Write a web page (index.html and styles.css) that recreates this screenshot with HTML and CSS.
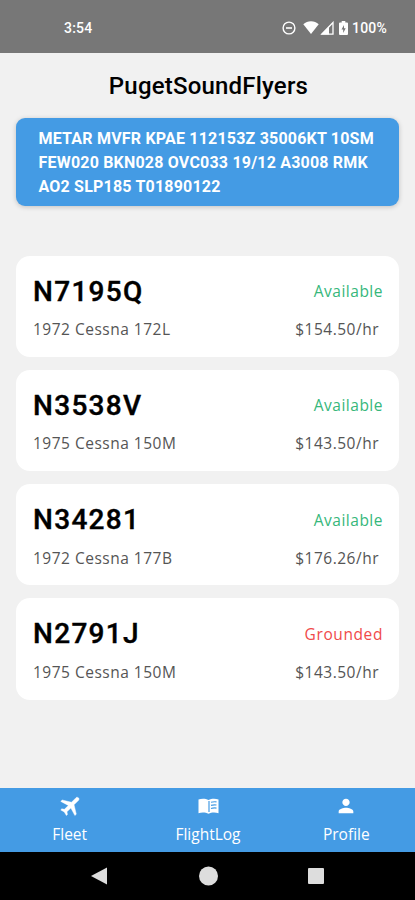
FILE: index.html
```html
<!DOCTYPE html>
<html lang="en">
<head>
<meta charset="UTF-8" />
<meta name="viewport" content="width=device-width, initial-scale=1" />
<title>PugetSoundFlyers</title>
<link rel="stylesheet" href="styles.css">
</head>
<body>
<div class="status-bar">
  <span class="clock">3:54</span>
  <div class="status-icons">
    <svg class="dnd" width="14" height="14" viewBox="0 0 14 14"><circle cx="7" cy="7" r="5.9" fill="none" stroke="#fff" stroke-width="1.4"/><path d="M4 7h6" stroke="#fff" stroke-width="1.6"/></svg>
    <svg class="wifi" width="16" height="13" viewBox="0 0 16 13"><path d="M8 13L.3 3.2C2.500 1.200 5 .2 8 .2s5.500 1 7.700 3z" fill="#fff"/></svg>
    <svg class="signal" width="14" height="14" viewBox="0 0 14 14"><path d="M1.800 13.200H13V1.500z" fill="none" stroke="#fff" stroke-width="1.300"/><path d="M1 13.500L9 5.500v8z" fill="#fff"/></svg>
    <svg class="battery" width="9" height="14" viewBox="0 0 9 14"><path d="M2.700 0h3.600v1.500H8q1 0 1 1V13q0 1-1 1H1q-1 0-1-1V2.500q0-1 1-1h1.700z" fill="#fff"/><path d="M5 4L2.500 8.500h1.700V12l2.500-4.700H5z" fill="#777"/></svg>
    <span>100%</span>
  </div>
</div>

<main>
  <h1>PugetSoundFlyers</h1>

  <p class="metar">METAR MVFR KPAE 112153Z 35006KT 10SM<br>FEW020 BKN028 OVC033 19/12 A3008 RMK<br>AO2 SLP185 T01890122</p>

  <section class="fleet">
    <div class="plane">
      <div class="row">
        <h2>N7195Q</h2>
        <span class="available">Available</span>
      </div>
      <div class="row details">
        <span>1972 Cessna 172L</span>
        <span class="price">$154.50/hr</span>
      </div>
    </div>
    <div class="plane">
      <div class="row">
        <h2>N3538V</h2>
        <span class="available">Available</span>
      </div>
      <div class="row details">
        <span>1975 Cessna 150M</span>
        <span class="price">$143.50/hr</span>
      </div>
    </div>
    <div class="plane">
      <div class="row">
        <h2>N34281</h2>
        <span class="available">Available</span>
      </div>
      <div class="row details">
        <span>1972 Cessna 177B</span>
        <span class="price">$176.26/hr</span>
      </div>
    </div>
    <div class="plane">
      <div class="row">
        <h2>N2791J</h2>
        <span class="grounded">Grounded</span>
      </div>
      <div class="row details">
        <span>1975 Cessna 150M</span>
        <span class="price">$143.50/hr</span>
      </div>
    </div>
  </section>
</main>

<nav class="tabs">
  <a class="tab">
    <svg width="24" height="24" viewBox="0 0 24 24"><path transform="translate(1 0) rotate(45 12 12)" d="M21.500 16v-2l-8.200-5V2.500c0-.83-.8-1.500-1.800-1.500S9.700 1.670 9.700 2.500V9l-8.200 5v2l8.200-2.500V19l-2.200 1.500V22l4-1 4 1v-1.500L13.300 19v-5.500z" stroke="#fff" stroke-width=".4"/></svg>
    <span>Fleet</span>
  </a>
  <a class="tab">
    <svg width="24" height="24" viewBox="0 0 24 24"><path d="M12.500 6C9.500 4.300 5.500 4.300 2.500 5.500v13.700c3-1 7-1 10 .5 3-1.500 7-1.500 10-.5V5.500c-3-1.200-7-1.200-10 .5z"/><path class="page" d="M13 7v11M15 8.300q2.500-.8 5.500-.4M15 11.400q2.500-.8 5.500-.4M15 14.500q2.500-.8 5.500-.4"/></svg>
    <span>FlightLog</span>
  </a>
  <a class="tab">
    <svg width="22" height="24" viewBox="0 0 24 24"><path d="M12 12c2.210 0 4-1.790 4-4s-1.790-4-4-4-4 1.790-4 4 1.790 4 4 4zm0 2c-2.670 0-8 1.340-8 4v2h16v-2c0-2.660-5.330-4-8-4z"/></svg>
    <span>Profile</span>
  </a>
</nav>

<div class="system-nav">
  <svg width="18" height="20" viewBox="0 0 18 20"><path d="M0 10L16 1.500v17z"/></svg>
  <svg width="20" height="20" viewBox="0 0 20 20"><circle cx="9.500" cy="10" r="9.500"/></svg>
  <svg width="16" height="16" viewBox="0 0 16 16"><rect width="16" height="16" rx="1"/></svg>
</div>
</body>
</html>
```

FILE: styles.css
```css
* {
  box-sizing: border-box;
}
body {
  margin: 0;
  height: 900px;
  display: flex;
  flex-direction: column;
  background: #f1f1f1;
  font-family: "Open Sans", "Noto Sans", sans-serif;
  color: #000;
}
svg {
  display: block;
}
.status-bar {
  height: 52.5px;
  padding: 3px 28px 0 64px;
  display: flex;
  align-items: center;
  justify-content: space-between;
  background: #777;
  color: #fff;
  font-family: Roboto, sans-serif;
  font-size: 14px;
  font-weight: 500;
}
.clock {
  letter-spacing: 0.2px;
}
.status-icons {
  display: flex;
  align-items: center;
}
.status-icons span {
  letter-spacing: 0.2px;
}
.wifi {
  margin-left: 7px;
}
.signal {
  margin-left: 1px;
}
.battery {
  margin: 0 4px 0 5px;
}
main {
  flex: 1;
  padding: 18px 16px 0;
}
h1 {
  margin: 0 0 16px;
  padding-left: 2px;
  line-height: 31px;
  text-align: center;
  font-family: Roboto, sans-serif;
  font-size: 24px;
  font-weight: 500;
  letter-spacing: 0.2px;
}
.metar {
  margin: 0 0 50px;
  height: 88px;
  padding: 9px 22px 0 22.5px;
  border-radius: 9px;
  background: #449be4;
  box-shadow: 0 1px 5px rgb(0 0 0 / 0.2);
  color: #fff;
  font-family: Roboto, sans-serif;
  font-size: 16px;
  font-weight: 700;
  line-height: 24px;
  letter-spacing: 0.2px;
  white-space: nowrap;
}
.fleet {
  display: flex;
  flex-direction: column;
  gap: 13px;
}
.plane {
  height: 101.3px;
  padding: 16.5px 16px 0 17px;
  border-radius: 14px;
  background: #fff;
}
.row {
  display: flex;
  align-items: center;
  justify-content: space-between;
  height: 38px;
  font-size: 15.5px;
  letter-spacing: 0.5px;
}
h2 {
  margin: 0;
  font-family: Roboto, sans-serif;
  font-size: 28px;
  font-weight: 500;
  letter-spacing: 1.3px;
  -webkit-text-stroke: 0.4px #000;
}
.available {
  color: #36b77b;
}
.grounded {
  color: #f04a4a;
  letter-spacing: 0.6px;
}
.details {
  color: #555;
}
.price {
  margin-right: 4px;
}
.tabs {
  height: 64px;
  display: flex;
  justify-content: space-between;
  background: #449be4;
  color: #fff;
}
.tab {
  flex: 1;
  display: flex;
  flex-direction: column;
  align-items: center;
  padding: 6px 0 0 1px;
  font-size: 15.5px;
  font-weight: 500;
  line-height: 33px;
}
.tab svg {
  fill: #fff;
}
.page {
  fill: none;
  stroke: #449be4;
  stroke-width: 1.2;
}
.system-nav {
  height: 48px;
  padding: 0 91px;
  display: flex;
  align-items: center;
  justify-content: space-between;
  background: #000;
  fill: #ddd;
}
```
